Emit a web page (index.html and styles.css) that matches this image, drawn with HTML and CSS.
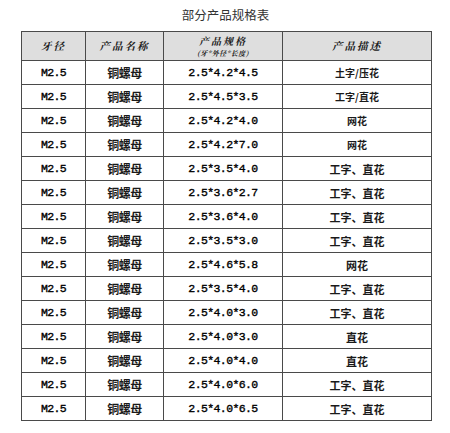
FILE: index.html
```html
<!DOCTYPE html>
<html>
<head>
<meta charset="utf-8">
<link rel="stylesheet" href="styles.css">
</head>
<body>
<div class="page">
  <div class="title">部分产品规格表</div>
  <table class="spec">
    <colgroup>
      <col class="c1"><col class="c2"><col class="c3"><col class="c4">
    </colgroup>
    <thead>
      <tr>
        <th>牙径</th>
        <th>产品名称</th>
        <th><div class="h-main">产品规格</div><div class="h-sub">(牙*外径*长度)</div></th>
        <th>产品描述</th>
      </tr>
    </thead>
    <tbody>
      <tr><td class="m">M2.5</td><td class="cn">铜螺母</td><td class="m">2.5*4.2*4.5</td><td class="d sm">土字/压花</td></tr>
      <tr><td class="m">M2.5</td><td class="cn">铜螺母</td><td class="m">2.5*4.5*3.5</td><td class="d sm">工字/直花</td></tr>
      <tr><td class="m">M2.5</td><td class="cn">铜螺母</td><td class="m">2.5*4.2*4.0</td><td class="d sm">网花</td></tr>
      <tr><td class="m">M2.5</td><td class="cn">铜螺母</td><td class="m">2.5*4.2*7.0</td><td class="d sm">网花</td></tr>
      <tr><td class="m">M2.5</td><td class="cn">铜螺母</td><td class="m">2.5*3.5*4.0</td><td class="d">工字、直花</td></tr>
      <tr><td class="m">M2.5</td><td class="cn">铜螺母</td><td class="m">2.5*3.6*2.7</td><td class="d">工字、直花</td></tr>
      <tr><td class="m">M2.5</td><td class="cn">铜螺母</td><td class="m">2.5*3.6*4.0</td><td class="d">工字、直花</td></tr>
      <tr><td class="m">M2.5</td><td class="cn">铜螺母</td><td class="m">2.5*3.5*3.0</td><td class="d">工字、直花</td></tr>
      <tr><td class="m">M2.5</td><td class="cn">铜螺母</td><td class="m">2.5*4.6*5.8</td><td class="d">网花</td></tr>
      <tr><td class="m">M2.5</td><td class="cn">铜螺母</td><td class="m">2.5*3.5*4.0</td><td class="d">工字、直花</td></tr>
      <tr><td class="m">M2.5</td><td class="cn">铜螺母</td><td class="m">2.5*4.0*3.0</td><td class="d">工字、直花</td></tr>
      <tr><td class="m">M2.5</td><td class="cn">铜螺母</td><td class="m">2.5*4.0*3.0</td><td class="d">直花</td></tr>
      <tr><td class="m">M2.5</td><td class="cn">铜螺母</td><td class="m">2.5*4.0*4.0</td><td class="d">直花</td></tr>
      <tr><td class="m">M2.5</td><td class="cn">铜螺母</td><td class="m">2.5*4.0*6.0</td><td class="d">工字、直花</td></tr>
      <tr><td class="m">M2.5</td><td class="cn">铜螺母</td><td class="m">2.5*4.0*6.5</td><td class="d">工字、直花</td></tr>
    </tbody>
  </table>
</div>
</body>
</html>
```

FILE: styles.css
```css
html, body {
  margin: 0;
  padding: 0;
  background: #ffffff;
}
.page {
  width: 450px;
  height: 433px;
  padding: 0 0 0 21px;
  box-sizing: border-box;
}
.title {
  width: 409px;
  height: 31px;
  box-sizing: border-box;
  padding-top: 7px;
  text-align: center;
  font-family: "Noto Sans CJK SC", sans-serif;
  font-size: 12.5px;
  line-height: 16px;
  color: #333;
}
.spec {
  width: 410px;
  border-collapse: collapse;
  table-layout: fixed;
  color: #1a1a1a;
}
.c1 { width: 64px; }
.c2 { width: 78px; }
.c3 { width: 119px; }
.c4 { width: 149px; }
.spec th, .spec td {
  border: 1.5px solid #4a4a4a;
  padding: 0;
  text-align: center;
  vertical-align: middle;
}
.spec th {
  height: 28px;
  background: #dedede;
  font-family: "Noto Serif CJK SC", "Noto Sans CJK SC", serif;
  font-size: 10.5px;
  font-weight: bold;
  font-style: italic;
  letter-spacing: 2px;
  line-height: 12px;
}
.h-main {
  font-size: 10px;
  line-height: 14px;
}
.h-sub {
  font-size: 7px;
  letter-spacing: 0.5px;
  line-height: 10px;
}
.spec td {
  height: 23px;
}
.m {
  font-family: "Liberation Mono", "DejaVu Sans Mono", monospace;
  font-size: 11.5px;
  letter-spacing: -0.6px;
  font-weight: normal;
  color: #000;
  -webkit-text-stroke: 0.35px #000;
}
.cn {
  font-family: "Noto Sans CJK SC", sans-serif;
  font-size: 12px;
  font-weight: bold;
  letter-spacing: -0.5px;
}
.d {
  font-family: "Noto Sans CJK SC", sans-serif;
  font-size: 11px;
  font-weight: bold;
}
.d.sm {
  font-size: 10px;
}
```
